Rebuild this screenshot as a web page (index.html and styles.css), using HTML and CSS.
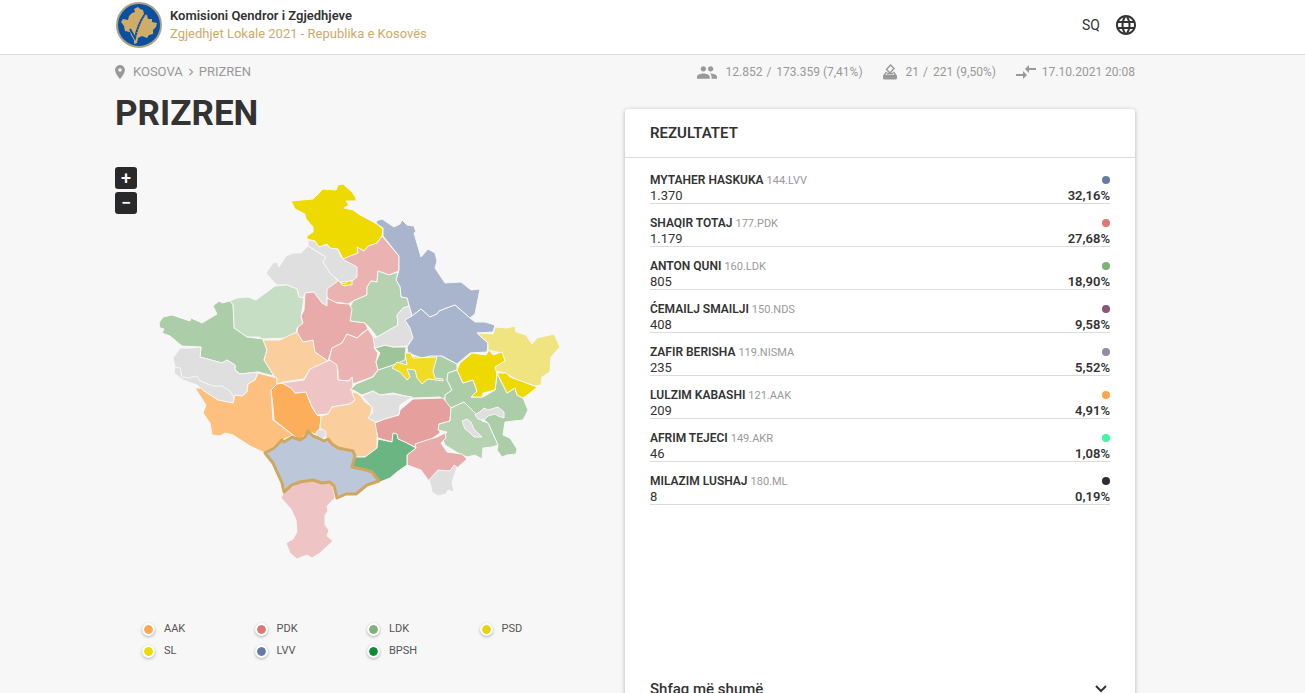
FILE: index.html
```html
<!DOCTYPE html>
<html lang="sq">
<head>
<meta charset="utf-8">
<meta name="viewport" content="width=device-width, initial-scale=1">
<title>Zgjedhjet Lokale 2021 - Prizren</title>
<link rel="stylesheet" href="styles.css">
</head>
<body>
<header class="site-header">
  <div class="brand">
    <svg class="brand-logo" viewBox="0 0 46 46" aria-hidden="true">
      <circle cx="23" cy="23" r="22" fill="#0a4fa0" stroke="#a9a183" stroke-width="2"/>
      <path fill="#d0ad67" d="M5 20 7 17 12 18 13 14 16 11 19 10 18 7 22 5 24 7 27 8 28 12 31 13 32 17 36 17 36 20 41 21 40 25 37 28 37 32 33 33 31 36 26 34 22 36 21 41 18 42 18 38 15 33 14 30 9 29 8 24z"/>
      <path fill="none" stroke="#0a4fa0" stroke-width="2" d="M14 27 19 36Q22 22 29 12"/>
      <path fill="none" stroke="#d0ad67" stroke-width="1" stroke-dasharray="1 2" d="M20 34Q23 22 29 13"/>
    </svg>
    <div class="brand-text">
      <strong class="brand-name">Komisioni Qendror i Zgjedhjeve</strong>
      <span class="brand-sub">Zgjedhjet Lokale 2021 - Republika e Kosovës</span>
    </div>
  </div>
  <button class="language" type="button">
    <span>SQ</span>
    <svg class="globe" viewBox="0 0 24 24" aria-hidden="true"><path fill="currentColor" d="M11.99 2C6.47 2 2 6.48 2 12s4.47 10 9.99 10C17.52 22 22 17.52 22 12S17.52 2 11.99 2zm6.93 6h-2.95a15.65 15.65 0 0 0-1.38-3.56A8.03 8.03 0 0 1 18.92 8zM12 4.04c.83 1.2 1.48 2.53 1.91 3.96h-3.82c.43-1.43 1.08-2.76 1.91-3.96zM4.26 14C4.1 13.36 4 12.69 4 12s.1-1.36.26-2h3.38c-.08.66-.14 1.32-.14 2s.06 1.34.14 2H4.26zm.82 2h2.95c.32 1.25.78 2.45 1.38 3.56A7.99 7.99 0 0 1 5.08 16zm2.95-8H5.08a7.99 7.99 0 0 1 4.33-3.56A15.65 15.65 0 0 0 8.03 8zM12 19.96c-.83-1.2-1.48-2.53-1.91-3.96h3.82c-.43 1.43-1.08 2.76-1.91 3.96zM14.34 14H9.66c-.09-.66-.16-1.32-.16-2s.07-1.35.16-2h4.68c.09.65.16 1.32.16 2s-.07 1.34-.16 2zm.25 5.56c.6-1.11 1.06-2.31 1.38-3.56h2.95a8.03 8.03 0 0 1-4.33 3.56zM16.36 14c.08-.66.14-1.32.14-2s-.06-1.34-.14-2h3.38c.16.64.26 1.31.26 2s-.1 1.36-.26 2h-3.38z"/></svg>
  </button>
</header>

<main class="page">
  <div class="info-bar">
    <nav class="crumbs" aria-label="Navigimi">
      <svg class="pin" viewBox="5 2 14 20" aria-hidden="true"><path fill="currentColor" d="M12 2C8.13 2 5 5.13 5 9c0 5.25 7 13 7 13s7-7.75 7-13c0-3.87-3.13-7-7-7zm0 9.5a2.5 2.5 0 0 1 0-5 2.5 2.5 0 0 1 0 5z"/></svg>
      <a href="#kosova">KOSOVA</a>
      <svg class="crumb-arrow" viewBox="0 0 6 10" aria-hidden="true"><path fill="none" stroke="currentColor" stroke-width="1.5" d="M1 1 5 5 1 9"/></svg>
      <a href="#prizren">PRIZREN</a>
    </nav>
    <div class="stats">
      <span class="stat">
        <svg class="stat-icon people" viewBox="1 5 22 14" aria-hidden="true"><path fill="currentColor" d="M16 11c1.66 0 2.99-1.34 2.99-3S17.66 5 16 5s-3 1.34-3 3 1.34 3 3 3zm-8 0c1.66 0 2.99-1.34 2.99-3S9.66 5 8 5 5 6.34 5 8s1.34 3 3 3zm0 2c-2.33 0-7 1.17-7 3.500V19h14v-2.500C15 14.170 10.330 13 8 13zm8 0c-.29 0-.62.02-.97.05 1.160.84 1.970 1.970 1.970 3.450V19h6v-2.500c0-2.330-4.670-3.500-7-3.500z"/></svg>
        <span>12.852 <span class="slash">/</span> 173.359 (7,41%)</span>
      </span>
      <span class="stat">
        <svg class="stat-icon ballot" viewBox="0 0 14 16" aria-hidden="true"><path fill="none" stroke="currentColor" stroke-width="1.4" d="M7.500 1 11 4.500 7 9 3.500 5.500z"/><path fill="none" stroke="currentColor" stroke-width="1.4" d="M3.500 8 1 11.500H13L10.500 8M4 9.500H10"/><path fill="currentColor" d="M0 11.500H14V14Q14 15.500 12.500 15.500H1.500Q0 15.500 0 14z"/></svg>
        <span>21 <span class="slash">/</span> 221 (9,50%)</span>
      </span>
      <span class="stat updated">
        <svg class="stat-icon sync" viewBox="2 5 20 14" aria-hidden="true"><path fill="currentColor" d="M9.010 14H2v2h7.010v3L13 15l-3.990-4v3zm5.980-1v-3H22V8h-7.010V5L11 9l3.990 4z"/></svg>
        17.10.2021 20:08
      </span>
    </div>
  </div>

  <div class="columns">
    <section class="region">
      <h1 class="region-title">PRIZREN</h1>
      <div class="map">
        <div class="map-zoom">
          <button class="zoom-button" type="button" aria-label="Zmadho">+</button>
          <button class="zoom-button" type="button" aria-label="Zvogëlo">−</button>
        </div>
        <svg class="map-drawing" viewBox="115 155 510 415" role="img" aria-label="Harta e komunave">
          <g class="areas">
            <path fill="#eab3b1" d="M382 236 399 256 399 271 389 275 378 271 377 282 371 281 367 287 367 295 353 301 347 305 343 303 332 302 327 297 323 290 338 281 343 258 358 253 357 247 364 251 368 246 377 243z"/>
            <path fill="#dfdfdf" d="M266 273 273 263 277 262 279 267 286 256 293 253 301 253 308 246 326 257 323 262 330 273 338 281 327 289 327 306 322 303 316 295 314 292 305 293 303 298 299 297 297 289 287 285 277 285 272 280z"/>
            <path fill="#dfdfdf" d="M308 240 314 241 319 246 327 245 331 248 338 249 341 257 344 260 357 267 357 277 352 281 340 282 330 273 323 262 326 257 308 246z"/>
            <path fill="#eed900" d="M291 201 313 199 323 189 336 190 338 185 343 184 352 192 356 198 356 201 346 201 349 205 344 208 353 210 360 215 377 224 383 229 382 236 377 243 368 246 364 251 357 247 358 253 350 256 343 259 338 249 330 248 327 244 319 247 315 241 307 239 307 236 313 232 313 227 306 219 305 214 295 209z"/>
            <path fill="#eed900" d="M340 282 345 284 348 281 352 281 352 285 348 285 345 286 342 285z"/>
            <path fill="#a9b5cc" d="M376 221 382 219 394 227 400 224 402 220 407 225 414 226 416 232 414 233 421 257 428 249 435 253 437 261 435 268 445 283 461 282 471 290 480 289 475 314 470 318 455 305 439 311 437 314 430 317 421 309 412 316 407 298 401 297 400 287 396 280 399 270 399 256 383 236 383 228 377 224z"/>
            <path fill="#b5d2b1" d="M378 271 389 275 398 272 396 280 400 287 401 297 407 298 409 306 403 308 397 315 398 325 377 337 370 328 365 323 350 321 350 307 353 301 367 295 367 287 371 281 377 282z"/>
            <path fill="#c6dec3" d="M230 301 237 298 248 297 256 300 275 286 287 285 297 289 299 297 304 298 301 317 303 323 297 328 296 333 287 338 263 339 258 337 247 337 234 328 233 305z"/>
            <path fill="#abcda7" d="M159 323 163 317 172 315 190 321 191 318 202 323 217 314 213 306 219 301 222 303 230 301 233 305 234 328 247 337 263 339 267 350 264 360 274 376 258 372 240 374 235 370 235 365 227 360 222 363 200 357 201 347 182 346 170 336 162 333 164 329 160 328z"/>
            <path fill="#dfdfdf" d="M180 348 190 348 201 347 200 357 222 363 227 360 235 365 235 370 240 374 258 372 255 380 248 384 247 392 242 396 235 395 233 403 218 400 203 391 197 385 183 380 174 373 175 367 173 358z"/>
            <path fill="#fdc07f" d="M195 388 201 388 204 391 218 400 233 403 235 395 242 396 247 392 248 384 255 380 258 373 277 378 277 384 271 390 273 420 293 435 282 440 265 453 250 446 233 435 225 433 220 436 212 435 210 423 203 413 206 405z"/>
            <path fill="#fdae5b" d="M271 390 277 384 283 383 293 388 295 393 306 392 312 407 317 415 321 416 320 428 317 435 308 431 300 440 293 435 283 427 274 420 273 407z"/>
            <path fill="#fbce9e" d="M263 340 280 340 288 336 297 332 303 342 313 340 315 352 328 361 320 366 310 369 304 379 283 382 277 384 277 378 274 376 264 360 267 350z"/>
            <path fill="#e8aba9" d="M305 293 314 292 316 295 322 303 327 306 327 298 337 303 349 304 352 309 350 321 365 323 368 329 362 333 357 338 347 334 342 343 332 348 328 361 315 352 313 340 303 342 297 332 298 327 303 323 301 316 304 310z"/>
            <path fill="#eab3b1" d="M347 334 357 338 368 329 375 340 374 348 378 353 376 362 378 370 372 377 353 384 352 377 349 381 338 380 338 370 333 363 329 360 332 348 342 343z"/>
            <path fill="#eec5c4" d="M282 383 304 380 310 369 330 360 337 365 338 380 349 381 352 377 353 384 352 392 355 400 350 404 332 407 328 414 317 415 312 407 306 392 295 393 291 388z"/>
            <path fill="#fbce9e" d="M355 392 360 395 365 402 372 407 370 418 377 423 377 448 365 457 354 457 352 450 338 448 328 440 320 428 321 416 328 414 332 407 350 404 355 400 352 393z"/>
            <path fill="#abcda7" d="M350 390 356 384 373 377 378 370 393 365 407 358 433 352 457 364 457 370 448 373 447 380 452 390 445 395 445 403 440 397 413 398 393 393 380 395 373 391 362 395 353 390z"/>
            <path fill="#9dc599" d="M375 348 385 345 393 347 406 347 405 360 393 365 378 370 376 362 380 353z"/>
            <path fill="#dfdfdf" d="M409 306 412 316 405 320 410 328 413 338 407 346 393 347 385 345 375 348 373 338 377 337 398 325 397 315 403 308z"/>
            <path fill="#a9b5cc" d="M412 316 421 309 430 317 437 314 439 311 455 305 470 318 475 322 485 322 495 325 493 332 477 333 488 343 487 352 470 353 457 364 442 356 430 356 422 358 408 353 407 347 413 338 410 328 405 320z"/>
            <path fill="#f0e480" d="M477 333 493 334 495 327 507 328 515 326 516 332 526 335 532 344 537 338 554 334 560 347 551 357 550 372 542 377 541 385 535 386 517 380 505 373 495 371 495 366 505 361 502 353 488 350 488 343z"/>
            <path fill="#abcda7" d="M457 370 463 383 473 380 477 391 471 397 483 397 495 390 497 374 503 385 507 393 515 388 517 395 523 398 528 410 523 420 505 422 503 435 510 438 517 449 516 454 507 455 502 457 497 450 498 445 488 423 475 413 464 402 451 408 445 402 445 395 452 390 447 380 448 373z"/>
            <path fill="#eed900" d="M457 370 460 363 472 353 486 355 489 350 493 355 502 352 505 361 495 367 497 374 495 390 483 393 482 397 471 397 477 391 473 380 463 383z"/>
            <path fill="#eed900" d="M497 373 506 373 510 377 537 387 530 393 523 398 517 395 515 388 507 393 503 385z"/>
            <path fill="#f0dc22" d="M392 368 397 362 407 365 405 353 411 353 413 358 437 357 433 371 435 378 443 379 443 381 428 379 422 384 417 378 415 370 407 369 410 377 407 380 400 372z"/>
            <path fill="#dfdfdf" d="M362 396 373 391 380 395 393 394 412 397 400 405 399 415 385 419 376 422 368 418 373 412 372 407z"/>
            <path fill="#e5a09d" d="M375 423 385 419 399 415 400 410 413 399 443 398 451 408 450 421 439 424 440 433 427 442 415 447 398 439 397 435 393 434 392 442 378 438z"/>
            <path fill="#b5d2b1" d="M451 408 464 402 475 413 482 421 488 423 498 445 492 447 483 448 482 459 475 455 467 457 458 453 445 445 442 438 447 432 438 430 439 424 450 421z"/>
            <path fill="#dfdfdf" d="M475 415 481 411 484 408 488 410 498 407 504 412 504 418 498 416 495 414 488 416 484 420 478 419z"/>
            <path fill="#dfdfdf" d="M462 421 467 419 471 422 474 429 482 437 474 437 470 433 465 429z"/>
            <path fill="#e8aba9" d="M407 455 416 448 415 444 427 440 437 437 445 433 446 438 441 443 447 452 462 454 467 459 457 468 450 471 438 474 429 481 421 470 407 465z"/>
            <path fill="#dfdfdf" d="M429 480 438 470 450 471 454 465 457 467 452 482 454 492 448 490 446 494 438 496 432 492 431 486z"/>
            <path fill="#6bb583" d="M354 457 365 457 377 448 378 439 392 442 393 433 397 434 398 439 407 443 416 448 407 455 407 465 397 472 390 478 380 482 372 471 352 467z"/>
            <path fill="#eec5c4" d="M284 492 300 482 313 480 332 483 335 498 327 506 328 511 325 515 325 525 329 530 327 536 333 541 320 553 312 558 307 555 297 559 290 553 286 543 293 539 297 532 296 520 291 509 281 498z"/>
            <circle fill="#dfdfdf" cx="321" cy="434" r="5"/>
          </g>
          <path class="area-line" d="M175 367 180 368 182 377 188 378 197 376 200 381 213 386 222 386 230 391 234 398"/>
          <path class="area-selected" d="M265 453 274 448 282 440 284 442 292 437 300 440 305 437 308 431 313 436 318 438 324 441 328 439 332 444 338 448 353 451 355 456 352 467 366 470 372 472 379 481 367 485 356 494 346 494 337 498 334 486 330 482 322 483 313 480 300 482 292 485 284 492 282 483 273 463z"/>
        </svg>
      </div>
      <ul class="legend">
        <li><i class="mark aak"></i>AAK</li>
        <li><i class="mark pdk"></i>PDK</li>
        <li><i class="mark ldk"></i>LDK</li>
        <li><i class="mark psd"></i>PSD</li>
        <li><i class="mark sl"></i>SL</li>
        <li><i class="mark lvv"></i>LVV</li>
        <li><i class="mark bpsh"></i>BPSH</li>
      </ul>
    </section>

    <section class="results">
      <h2 class="results-title">REZULTATET</h2>
      <ol class="candidates">
        <li class="candidate"><span class="who"><b>MYTAHER HASKUKA</b> <small>144.LVV</small></span><i class="dot lvv"></i><span>1.370</span><b class="share">32,16%</b></li>
        <li class="candidate"><span class="who"><b>SHAQIR TOTAJ</b> <small>177.PDK</small></span><i class="dot pdk"></i><span>1.179</span><b class="share">27,68%</b></li>
        <li class="candidate"><span class="who"><b>ANTON QUNI</b> <small>160.LDK</small></span><i class="dot ldk"></i><span>805</span><b class="share">18,90%</b></li>
        <li class="candidate"><span class="who"><b>ĆEMAILJ SMAILJI</b> <small>150.NDS</small></span><i class="dot nds"></i><span>408</span><b class="share">9,58%</b></li>
        <li class="candidate"><span class="who"><b>ZAFIR BERISHA</b> <small>119.NISMA</small></span><i class="dot nisma"></i><span>235</span><b class="share">5,52%</b></li>
        <li class="candidate"><span class="who"><b>LULZIM KABASHI</b> <small>121.AAK</small></span><i class="dot aak"></i><span>209</span><b class="share">4,91%</b></li>
        <li class="candidate"><span class="who"><b>AFRIM TEJECI</b> <small>149.AKR</small></span><i class="dot akr"></i><span>46</span><b class="share">1,08%</b></li>
        <li class="candidate"><span class="who"><b>MILAZIM LUSHAJ</b> <small>180.ML</small></span><i class="dot ml"></i><span>8</span><b class="share">0,19%</b></li>
      </ol>
      <button class="show-more" type="button">
        <span>Shfaq më shumë</span>
        <svg class="chevron" viewBox="0 0 12 8" aria-hidden="true"><path fill="none" stroke="currentColor" stroke-width="2" d="M1 1 6 6 11 1"/></svg>
      </button>
    </section>
  </div>
</main>
</body>
</html>
```
FILE: styles.css
```css
* {
  box-sizing: border-box;
}

body {
  display: flex;
  flex-direction: column;
  height: 100vh;
  margin: 0;
  background: #f7f7f7;
  color: #333;
  font: 13px/16px Roboto, "Liberation Sans", sans-serif;
}

button {
  border: 0;
  background: none;
  color: inherit;
  font: inherit;
  cursor: pointer;
}

.site-header {
  display: flex;
  flex: none;
  align-items: center;
  justify-content: space-between;
  padding: 2px 167px 6px 116px;
  border-bottom: 1px solid #dadada;
  background: #fff;
}

.brand {
  display: flex;
  align-items: center;
  gap: 8px;
}

.brand-logo {
  width: 46px;
  height: 46px;
}

.brand-text {
  display: flex;
  flex-direction: column;
  line-height: 18px;
}

.brand-name {
  font-weight: 600;
}

.brand-sub {
  color: #cbab6b;
}

.language {
  display: flex;
  align-items: center;
  gap: 14px;
  padding: 0;
  font-size: 14px;
}

.globe {
  width: 24px;
  height: 24px;
}

.page {
  flex: 1;
  min-height: 0;
  padding: 0 170px 0 115px;
  overflow-y: auto;
  scrollbar-width: none;
}

.info-bar {
  display: flex;
  justify-content: space-between;
  padding: 9px 0 8px;
  color: #999;
}

.crumbs,
.stats,
.stat {
  display: flex;
  align-items: center;
}

.crumbs {
  gap: 5px;
}

.crumbs a {
  color: inherit;
  text-decoration: none;
}

.pin {
  width: 10px;
  height: 14px;
  margin-right: 3px;
}

.crumb-arrow {
  width: 6px;
  height: 8px;
}

.stats {
  gap: 20px;
  font-size: 12px;
}

.stat {
  gap: 9px;
}

.updated {
  gap: 6px;
}

.slash {
  padding: 0 2px 0 1px;
}

.people {
  width: 20px;
  height: 13px;
}

.ballot {
  width: 14px;
  height: 16px;
}

.sync {
  width: 20px;
  height: 14px;
}

.columns {
  display: grid;
  grid-template-columns: 1fr 1fr;
  align-items: start;
  padding-bottom: 24px;
}

.region-title {
  margin: 0;
  padding: 6px 0 3px;
  font-size: 35px;
  font-weight: 700;
  line-height: 40px;
}

.map {
  position: relative;
  padding-top: 18px;
}

.map-zoom {
  position: absolute;
  top: 30px;
  left: 0;
  display: grid;
  gap: 3px;
}

.zoom-button {
  width: 22px;
  height: 22px;
  padding: 0;
  border-radius: 3px;
  background: #292929;
  color: #fff;
  font-size: 18px;
  font-weight: 500;
  line-height: 22px;
}

.map-drawing {
  display: block;
  width: 100%;
}

.areas {
  stroke: #f7f7f7;
  stroke-linejoin: round;
}

.area-line {
  fill: none;
  stroke: #f7f7f7;
}

.area-selected {
  fill: #bcc7d9;
  stroke: #cfa75f;
  stroke-width: 3;
  stroke-linejoin: round;
}

.legend {
  display: grid;
  grid-template-columns: repeat(4, 1fr);
  gap: 6px 0;
  margin: 0;
  padding: 51px 33px 0 27px;
  color: #555;
  font-size: 11px;
  list-style: none;
}

.legend li {
  display: flex;
  align-items: center;
  gap: 9px;
}

.mark {
  width: 13px;
  height: 13px;
  border: 2px solid #fff;
  border-radius: 50%;
  background-clip: padding-box;
  box-shadow: 0 1px 3px rgba(0, 0, 0, 0.3);
}

.dot {
  width: 8px;
  height: 8px;
  border-radius: 50%;
}

.aak { background-color: #ffa64d; }
.pdk { background-color: #dd7973; }
.ldk { background-color: #7ab374; }
.psd { background-color: #e8d20c; }
.sl { background-color: #eed900; }
.lvv { background-color: #647ba6; }
.bpsh { background-color: #0f8a35; }
.nds { background-color: #8a5578; }
.nisma { background-color: #9a87a8; }
.akr { background-color: #3dfa9c; }
.ml { background-color: #2e2b38; }

.results {
  margin-top: 21px;
  border-radius: 3px;
  background: #fff;
  box-shadow: 0 1px 4px rgba(0, 0, 0, 0.3);
}

.results-title {
  margin: 0;
  padding: 12px 25px;
  border-bottom: 1px solid #dcdcdc;
  font-size: 15px;
  font-weight: 600;
  line-height: 24px;
}

.candidates {
  min-height: 507px;
  margin: 0;
  padding: 3px 25px 0;
  list-style: none;
}

.candidate {
  display: grid;
  grid-template: 16px 15px / 1fr auto;
  align-items: center;
  justify-items: start;
  padding-top: 11px;
  border-bottom: 1px solid #dcdcdc;
}

.candidate .dot {
  justify-self: end;
}

.who {
  font-size: 12px;
}

.who b {
  font-weight: 600;
}

.who small {
  color: #999;
  font-size: 11px;
}

.share {
  font-weight: 600;
}

.show-more {
  display: flex;
  align-items: center;
  justify-content: space-between;
  width: 100%;
  padding: 12px 28px 12px 25px;
  font-size: 15px;
  font-weight: 500;
  line-height: 24px;
}

.chevron {
  width: 12px;
  height: 8px;
}
```
